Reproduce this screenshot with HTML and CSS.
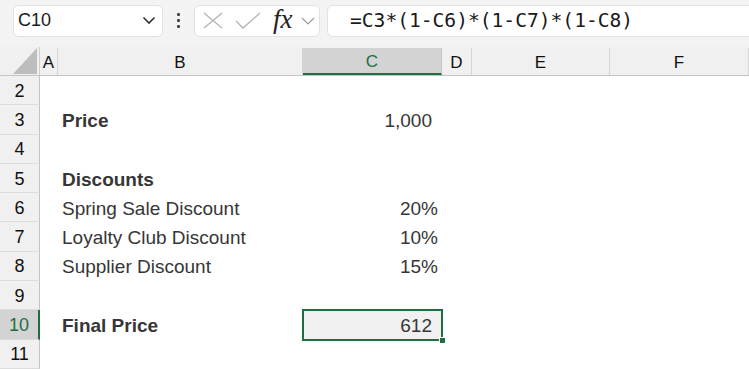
FILE: index.html
```html
<!DOCTYPE html>
<html>
<head>
    <title>Final Price</title>
    <link rel="stylesheet" href="styles.css">
</head>
<body>
    <div class="formula-bar">
        <div class="name-box">
            <span>C10</span>
            <svg class="chev" width="14" height="9" viewBox="0 0 14 9"><path d="M1.5 1.5 L7 7 L12.5 1.5" fill="none" stroke="#333" stroke-width="1.6"/></svg>
        </div>
        <div class="dots"><i></i><i></i><i></i></div>
        <div class="fx-box">
            <svg width="22" height="18" viewBox="0 0 22 18"><path d="M2 1 L20 16 M20 1 L2 16" stroke="#b4b4b4" stroke-width="1.3" fill="none"/></svg>
            <svg width="26" height="18" viewBox="0 0 26 18"><path d="M1 9 L8 16 L25 1" stroke="#b4b4b4" stroke-width="1.3" fill="none"/></svg>
            <span class="fx">fx</span>
            <svg width="14" height="8" viewBox="0 0 14 8"><path d="M1 1 L7 7 L13 1" fill="none" stroke="#9a9a9a" stroke-width="1.2"/></svg>
        </div>
        <div class="formula">=C3*(1-C6)*(1-C7)*(1-C8)</div>
    </div>

    <div class="sheet">
        <div class="row col-heads">
            <div class="corner"><svg width="24" height="26" viewBox="0 0 24 26"><path d="M24 0 L24 26 L0 26 Z" fill="#bdbdbd"/></svg></div>
            <div class="ch">A</div>
            <div class="ch">B</div>
            <div class="ch active">C</div>
            <div class="ch">D</div>
            <div class="ch">E</div>
            <div class="ch">F</div>
        </div>

        <div class="row"><div class="rh">2</div><div></div><div></div><div></div><div></div><div></div><div></div></div>
        <div class="row"><div class="rh">3</div><div></div><div class="cell bold">Price</div><div class="cell num">1,000</div><div></div><div></div><div></div></div>
        <div class="row"><div class="rh">4</div><div></div><div></div><div></div><div></div><div></div><div></div></div>
        <div class="row"><div class="rh">5</div><div></div><div class="cell bold">Discounts</div><div></div><div></div><div></div><div></div></div>
        <div class="row"><div class="rh">6</div><div></div><div class="cell">Spring Sale Discount</div><div class="cell pct">20%</div><div></div><div></div><div></div></div>
        <div class="row"><div class="rh">7</div><div></div><div class="cell">Loyalty Club Discount</div><div class="cell pct">10%</div><div></div><div></div><div></div></div>
        <div class="row"><div class="rh">8</div><div></div><div class="cell">Supplier Discount</div><div class="cell pct">15%</div><div></div><div></div><div></div></div>
        <div class="row"><div class="rh">9</div><div></div><div></div><div></div><div></div><div></div><div></div></div>
        <div class="row"><div class="rh active">10</div><div></div><div class="cell bold">Final Price</div><div class="cell num selected">612</div><div></div><div></div><div></div></div>
        <div class="row"><div class="rh">11</div><div></div><div></div><div></div><div></div><div></div><div></div></div>
    </div>
</body>
</html>
```

FILE: styles.css
```css
body {
    margin: 0;
    background-color: #fff;
    font-family: "Liberation Sans", Arial, sans-serif;
    overflow: hidden;
}

/* top bar with name box and formula */
.formula-bar {
    display: flex;
    align-items: center;
    height: 47px;
    background-color: #f3f3f3;
    padding-left: 13px;
    box-sizing: border-box;
    padding-bottom: 6px;
}

.name-box,
.fx-box,
.formula {
    height: 32px;
    box-sizing: border-box;
    background-color: #fff;
    border: 1px solid #e2e2e2;
    border-radius: 6px;
    display: flex;
    align-items: center;
}

.name-box {
    width: 150px;
    padding-left: 4px;
    padding-right: 6px;
    justify-content: space-between;
    font-size: 18px;
    color: #1a1a1a;
}

.dots {
    width: 31px;
    display: flex;
    flex-direction: column;
    align-items: center;
    gap: 3px;
}

.dots i {
    width: 3px;
    height: 3px;
    background-color: #444;
    border-radius: 1px;
}

.fx-box {
    width: 126px;
    padding-left: 7px;
    gap: 11px;
}

.fx {
    font-family: "Liberation Serif", "Times New Roman", serif;
    font-style: italic;
    font-size: 27px;
    color: #222;
    margin-left: 1px;
    margin-top: -3px;
    margin-right: -3px;
}

.formula {
    margin-left: 7px;
    flex: 1;
    margin-right: -20px;
    padding-left: 22px;
    font-family: "DejaVu Sans Mono", "Liberation Mono", monospace;
    font-size: 19.6px;
    color: #1a1a1a;
}

/* grid */
.row {
    display: grid;
    grid-template-columns: 40px 18px 245px 139px 30px 138px 139px;
    height: 29.3px;
}

.col-heads {
    height: 29px;
    background-color: #f0f0f0;
    border-bottom: 1px solid #c4c4c4;
    box-sizing: border-box;
    font-size: 17px;
    color: #111;
}

.corner {
    display: flex;
    justify-content: flex-end;
    align-items: flex-end;
    padding-right: 2px;
    padding-bottom: 1px;
    border-right: 1px solid #cfcfcf;
}

.ch {
    display: flex;
    align-items: center;
    justify-content: center;
    border-right: 1px solid #d6d6d6;
    margin-top: 1px;
    padding-top: 2px;
}

.ch.active {
    background-color: #d3d3d3;
    color: #1e6e42;
    border-bottom: 2px solid #1e6e42;
    border-right-color: #c6c6c6;
}

.rh {
    background-color: #f0f0f0;
    border-right: 1px solid #c4c4c4;
    border-bottom: 1px solid #dcdcdc;
    box-sizing: border-box;
    display: flex;
    align-items: center;
    justify-content: center;
    font-size: 18px;
    color: #111;
    padding-top: 2px;
}

.rh.active {
    background-color: #d3d3d3;
    color: #1e6e42;
    border-right: 2px solid #1e6e42;
}

.cell {
    display: flex;
    align-items: center;
    padding-left: 4px;
    padding-top: 2px;
    font-size: 19px;
    color: #363636;
    white-space: nowrap;
}

.bold {
    font-weight: bold;
}

.num {
    justify-content: flex-end;
    padding-right: 10px;
}

.pct {
    justify-content: flex-end;
    padding-right: 4px;
}

.selected {
    position: relative;
    background-color: #f0f0f0;
}

.selected::after {
    content: "";
    position: absolute;
    left: -1px;
    top: -1px;
    right: -1px;
    bottom: -1px;
    border: 2px solid #1e6e42;
}

.selected::before {
    content: "";
    position: absolute;
    right: -4px;
    bottom: -4px;
    width: 5px;
    height: 5px;
    background-color: #1e6e42;
    border: 1px solid #fff;
    z-index: 1;
}
```
